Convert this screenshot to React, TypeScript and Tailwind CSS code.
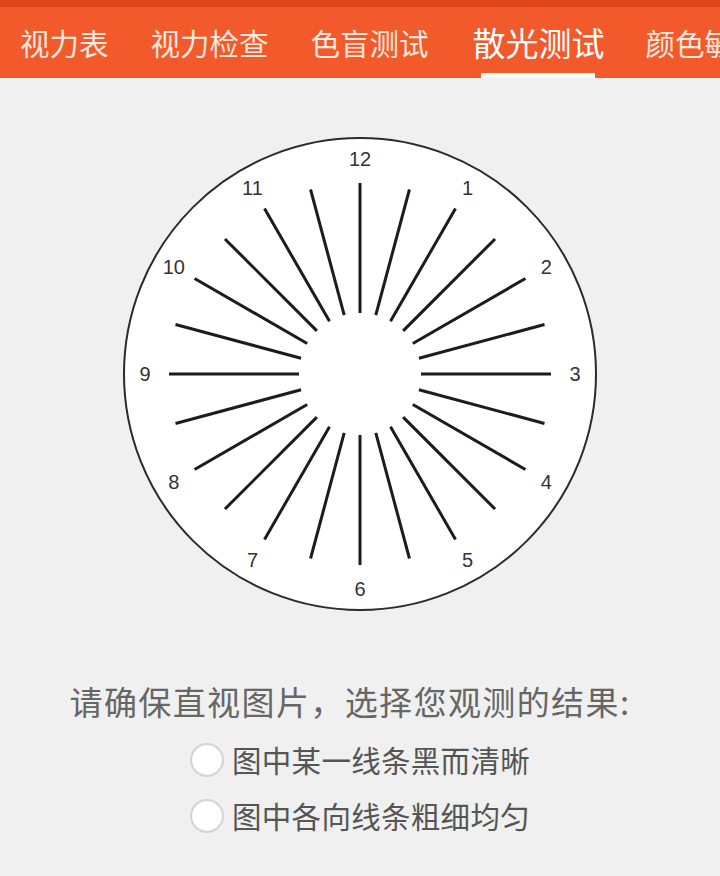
import React from "react";

const tabs = ["视力表", "视力检查", "色盲测试", "散光测试", "颜色敏感"];
const active = 3;

function AstigmatismChart() {
  const cx = 240;
  const cy = 240;
  const spokes = Array.from({ length: 24 }, (_, i) => i * 15);
  const hours = Array.from({ length: 12 }, (_, i) => i + 1);

  return (
    <svg width={480} height={480} viewBox="0 0 480 480">
      <circle cx={cx} cy={cy} r={236} fill="#fff" stroke="#2b2b2b" strokeWidth={2} />
      {spokes.map((deg) => {
        const a = (deg * Math.PI) / 180;
        const s = Math.sin(a);
        const c = Math.cos(a);
        return (
          <line
            key={deg}
            x1={cx + 61 * s}
            y1={cy - 61 * c}
            x2={cx + 191 * s}
            y2={cy - 191 * c}
            stroke="#1c1c1c"
            strokeWidth={3}
          />
        );
      })}
      {hours.map((h) => {
        const a = (h * 30 * Math.PI) / 180;
        return (
          <text
            key={h}
            x={cx + 215 * Math.sin(a)}
            y={cy - 215 * Math.cos(a)}
            textAnchor="middle"
            dominantBaseline="central"
            fontSize={20}
            fill="#333"
            fontFamily="'Liberation Sans', Arial, sans-serif"
          >
            {h}
          </text>
        );
      })}
    </svg>
  );
}

function Radio({ label }: { label: string }) {
  return (
    <label className="flex items-center h-[56px] cursor-pointer">
      <span className="w-[34px] h-[34px] rounded-full bg-white border-2 border-[#d4d4d4] shadow-[inset_0_0_2px_rgba(0,0,0,0.08)]" />
      <span className="ml-[8px] text-[29.5px] tracking-[0.3px] text-[#555] leading-none">{label}</span>
    </label>
  );
}

export default function App() {
  return (
    <div
      className="w-[720px] h-[876px] bg-[#f0f0f0] overflow-hidden"
      style={{ fontFamily: "'Noto Sans CJK SC', 'Noto Sans', sans-serif" }}
    >
      <div className="h-[7px] bg-[#e0461a]" />
      <nav className="h-[71px] bg-[#f25a2c] flex items-stretch pl-[20px] gap-[42px] whitespace-nowrap overflow-hidden">
        {tabs.map((t, i) => (
          <div
            key={t}
            className={i === active ? "relative flex items-center shrink-0 ml-[2px] mr-[-1px]" : "relative flex items-center shrink-0"}
          >
            <span
              className={
                i === active
                  ? "text-[33px] text-white leading-none"
                  : "text-[29.5px] text-[#fde8df] leading-none"
              }
            >
              {t}
            </span>
            {i === active && (
              <span className="absolute bottom-0 left-[8px] right-[10px] h-[5px] bg-white" />
            )}
          </div>
        ))}
      </nav>

      <div className="flex justify-center mt-[56px]">
        <AstigmatismChart />
      </div>

      <p className="mt-[67px] pr-[20px] text-center text-[33px] tracking-[1.4px] leading-[40px] text-[#666]">
        请确保直视图片，选择您观测的结果:
      </p>

      <div className="mt-[11px] flex flex-col items-center">
        <Radio label="图中某一线条黑而清晰" />
        <Radio label="图中各向线条粗细均匀" />
      </div>
    </div>
  );
}
